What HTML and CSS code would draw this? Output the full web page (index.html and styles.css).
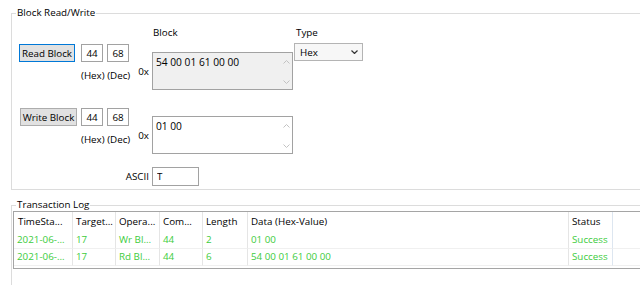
FILE: index.html
```html
<!DOCTYPE html>
<html lang="en">
<head>
    <meta charset="UTF-8">
    <meta name="viewport" content="width=device-width, initial-scale=1.0">
    <title>Block Read/Write</title>
    <link rel="stylesheet" href="styles.css">
</head>
<body>
    <fieldset class="group block-group">
        <legend>Block Read/Write</legend>
        <div class="rw-grid">
            <span></span>
            <span></span>
            <span class="head head-block">Block</span>
            <span class="head head-type">Type</span>

            <div class="ctl">
                <button class="btn btn-read focused">Read Block</button>
                <input class="num" type="text" value="44">
                <input class="num" type="text" value="68">
                <div class="units">(Hex) (Dec)</div>
            </div>
            <span class="prefix">0x</span>
            <div class="hexbox readonly">
                <div class="hex-text">54 00 01 61 00 00</div>
                <div class="scroll">
                    <svg width="7" height="4" viewBox="0 0 7 4"><polyline points="0.5,3.5 3.5,0.5 6.5,3.5" fill="none" stroke="#c2c2c2"/></svg>
                    <svg width="7" height="4" viewBox="0 0 7 4"><polyline points="0.5,0.5 3.5,3.5 6.5,0.5" fill="none" stroke="#c2c2c2"/></svg>
                </div>
            </div>
            <div class="combo-cell">
                <div class="combo">
                    <span>Hex</span>
                    <svg width="7" height="4" viewBox="0 0 7 4"><polyline points="0.5,0.5 3.5,3.5 6.5,0.5" fill="none" stroke="#333" stroke-width="1.2"/></svg>
                </div>
            </div>

            <div class="ctl ctl-write">
                <button class="btn btn-write">Write Block</button>
                <input class="num" type="text" value="44">
                <input class="num" type="text" value="68">
                <div class="units">(Hex) (Dec)</div>
            </div>
            <span class="prefix">0x</span>
            <div class="hexbox">
                <div class="hex-text">01 00</div>
                <div class="scroll">
                    <svg width="7" height="4" viewBox="0 0 7 4"><polyline points="0.5,3.5 3.5,0.5 6.5,3.5" fill="none" stroke="#c2c2c2"/></svg>
                    <svg width="7" height="4" viewBox="0 0 7 4"><polyline points="0.5,0.5 3.5,3.5 6.5,0.5" fill="none" stroke="#c2c2c2"/></svg>
                </div>
            </div>
            <span></span>

            <label class="ascii-label" for="ascii">ASCII</label>
            <div class="ascii-cell"><input class="ascii" id="ascii" type="text" value="T"></div>
            <span></span>
        </div>
    </fieldset>

    <fieldset class="group log-group">
        <legend>Transaction Log</legend>
        <div class="log">
            <table>
                <thead>
                    <tr>
                        <th class="c-time">TimeSta...</th>
                        <th class="c-target">Target...</th>
                        <th class="c-op">Opera...</th>
                        <th class="c-cmd">Com...</th>
                        <th class="c-len">Length</th>
                        <th class="c-data">Data (Hex-Value)</th>
                        <th class="c-status">Status</th>
                        <th class="c-rest"></th>
                    </tr>
                </thead>
                <tbody>
                    <tr>
                        <td>2021-06-...</td>
                        <td>17</td>
                        <td>Wr Bl...</td>
                        <td>44</td>
                        <td>2</td>
                        <td>01 00</td>
                        <td class="c-status">Success</td>
                        <td></td>
                    </tr>
                    <tr>
                        <td>2021-06-...</td>
                        <td>17</td>
                        <td>Rd Bl...</td>
                        <td>44</td>
                        <td>6</td>
                        <td>54 00 01 61 00 00</td>
                        <td class="c-status">Success</td>
                        <td></td>
                    </tr>
                </tbody>
            </table>
        </div>
    </fieldset>
</body>
</html>
```

FILE: styles.css
```css
body {
    margin: 0;
    width: 640px;
    height: 285px;
    overflow: hidden;
    background-color: #fff;
    color: #000;
    font-family: "Open Sans", "Noto Sans", sans-serif;
    font-size: 9.8px;
}
.group {
    width: 700px;
    margin: 7px 0 0 11px;
    border: 1px solid #dcdcdc;
    min-inline-size: 0;
}
.group legend {
    padding: 0 1px;
    line-height: 12px;
}
.block-group {
    padding: 0 0 3px 7px;
}
.block-group legend {
    margin-left: -3px;
}
.log-group {
    margin-top: 9px;
    padding: 0 0 20px 1px;
}
.log-group legend {
    margin-left: 3px;
}
.rw-grid {
    display: grid;
    grid-template-columns: 110px 23px 142px 70px;
    grid-template-rows: 24px 64px 60px 19px;
}
.head {
    padding-top: 7px;
    line-height: 13px;
}
.head-block {
    padding-left: 1px;
}
.head-type {
    padding-left: 2px;
}
.ctl {
    display: grid;
    grid-template-columns: auto 22px 22px;
    column-gap: 4px;
    align-content: start;
    margin-top: 1px;
}
.ctl-write {
    margin-left: 1px;
}
.btn {
    box-sizing: border-box;
    height: 18px;
    padding: 0;
    border: 1px solid #adadad;
    background-color: #e1e1e1;
    font: inherit;
    color: #000;
}
.btn-read {
    width: 56px;
}
.btn-write {
    width: 57px;
}
.btn.focused {
    border-color: #0078d7;
}
.num, .ascii {
    box-sizing: border-box;
    height: 18px;
    margin: 0;
    padding: 0;
    border: 1px solid #a2a2a2;
    font: inherit;
    color: #000;
    background-color: #fff;
}
.num {
    width: 22px;
    text-align: center;
}
.units {
    grid-column: 2 / 4;
    margin-top: 7px;
    line-height: 13px;
    white-space: nowrap;
}
.prefix {
    display: flex;
    align-items: center;
    justify-content: flex-end;
    height: 38px;
    margin-top: 9px;
    padding-right: 3px;
}
.hexbox {
    display: flex;
    box-sizing: border-box;
    width: 141px;
    height: 38px;
    margin-top: 9px;
    border: 1px solid #a2a2a2;
    background-color: #fff;
}
.hexbox.readonly {
    background-color: #f0f0f0;
}
.hex-text {
    flex: 1;
    padding: 3px 0 0 3px;
    line-height: 13px;
    font-size: 10.2px;
}
.scroll {
    display: flex;
    flex-direction: column;
    justify-content: space-between;
    align-items: center;
    width: 12px;
    padding: 7px 0 5px;
}
.scroll svg {
    display: block;
}
.combo {
    display: flex;
    align-items: center;
    justify-content: space-between;
    box-sizing: border-box;
    width: 69px;
    height: 18px;
    padding: 0 4px 0 5px;
    border: 1px solid #b4b4b4;
    background-color: #f7f7f7;
}
.combo svg {
    display: block;
}
.ascii-label {
    grid-column: 1 / 3;
    text-align: right;
    padding-right: 3px;
    line-height: 20px;
}
.ascii {
    width: 47px;
    height: 19px;
    padding-left: 4px;
}
.log {
    box-sizing: border-box;
    width: 700px;
    height: 58px;
    border: 1px solid #a5a5a5;
    overflow: hidden;
}
table {
    border-collapse: separate;
    border-spacing: 0;
    table-layout: fixed;
    width: 698px;
}
th, td {
    box-sizing: border-box;
    padding: 0 0 0 3px;
    border-right: 1px solid #e5e5e5;
    text-align: left;
    font-weight: normal;
    white-space: nowrap;
    overflow: hidden;
}
th {
    height: 20px;
    line-height: 20px;
}
td {
    height: 17px;
    line-height: 16px;
    border-bottom: 1px solid #f0f0f0;
    color: #3dcc3d;
}
th.c-time {
    width: 59px;
    padding-left: 4px;
}
th.c-target { width: 43px; }
th.c-op { width: 44px; }
th.c-cmd { width: 43px; }
th.c-len { width: 45px; }
th.c-data { width: 321px; }
th.c-status { width: 44px; }
.c-status {
    border-right-color: #dde6f0;
}
.c-rest {
    border-right: none;
}
td:last-child {
    border-right: none;
}
```
